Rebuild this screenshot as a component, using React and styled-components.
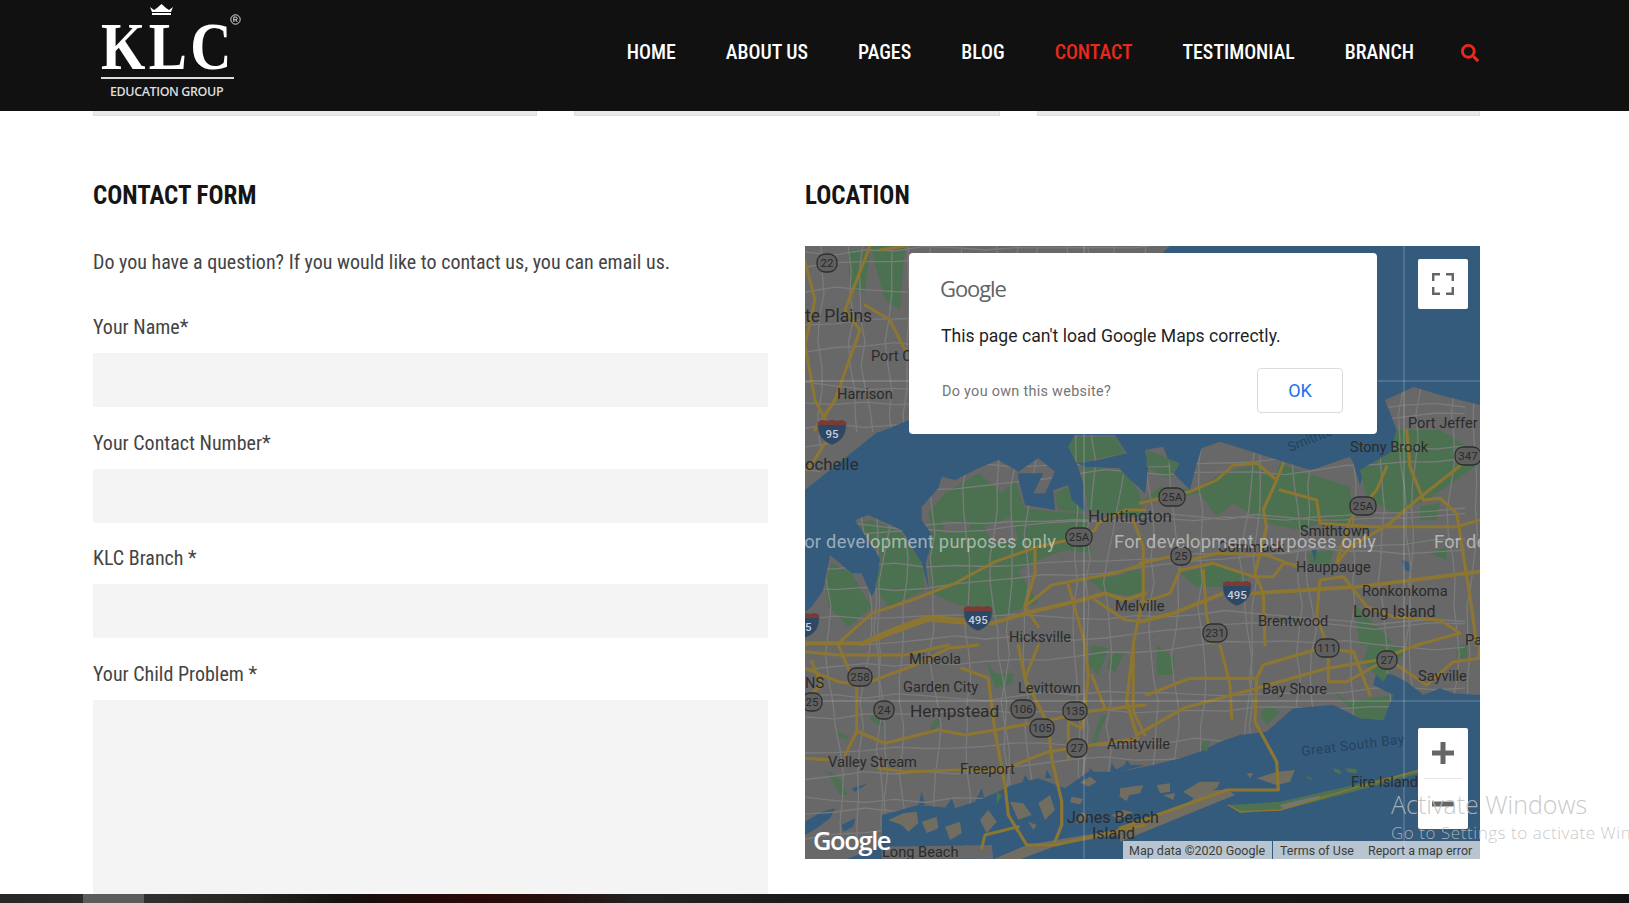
import React from "react";
import styled, { createGlobalStyle } from "styled-components";
import { FaSearch } from "react-icons/fa";

const Global = createGlobalStyle`
  html, body { margin: 0; padding: 0; background: #fff; height: 100%; overflow: hidden; }
  #root { height: 100%; }
  * { box-sizing: border-box; }
`;
const COND = `"Roboto", "Liberation Sans", sans-serif`;

const Page = styled.div`
  position: relative; height: 903px; display: flex; flex-direction: column; overflow: hidden;
  font-family: ${COND}; font-stretch: 75%;
`;
const Header = styled.header`
  flex: none; height: 111px; background: #111; display: flex; align-items: flex-start;
  justify-content: space-between; padding: 0 150px 0 101px;
`;
const Logo = styled.div`position: relative; width: 136px; height: 111px; display: flex; flex-direction: column; color: #fff;`;
const LogoMark = styled.div`
  font-family: "Liberation Serif", serif; font-stretch: normal; font-weight: 700; font-size: 68px; line-height: 46px;
  letter-spacing: 4px; margin-top: 23px; height: 50px; white-space: nowrap; transform: scaleX(.84); transform-origin: left center;
`;
const LogoRule = styled.div`height: 2px; width: 133px; background: #ddd; margin-top: 4px;`;
const LogoSub = styled.div`
  font-family: "Open Sans", sans-serif; font-stretch: normal; font-size: 12.5px; font-weight: 600; letter-spacing: -0.4px;
  color: #ddd; margin: 5px 0 0 9px; white-space: nowrap; line-height: 16px;
`;
const Crown = styled.svg`position: absolute; left: 49px; top: 4px;`;
const Registered = styled.svg`position: absolute; left: 129px; top: 14px;`;
const Nav = styled.nav`display: flex; align-items: center; gap: 50px; height: 105px;`;
const NavLink = styled.a`
  font-size: 19.85px; font-weight: 500; color: ${p => (p.$active ? "#e8291c" : "#fff")}; white-space: nowrap; line-height: 24px;
`;
const SearchBtn = styled.span`display: flex; color: #e8291c; font-size: 18px; margin-left: -3px;`;
const Strip = styled.div`
  flex: none; height: 5px; display: grid; grid-template-columns: 444px 426px 443px; justify-content: space-between; margin: 0 149px 0 93px;
`;
const StripCard = styled.div`background: #e9e9e9; border: 1px solid #dedede; border-top: 0;`;
const Main = styled.main`
  flex: 1; min-height: 0; overflow: hidden; display: grid; grid-template-columns: 675px 675px;
  column-gap: 37px; padding: 65px 0 0 93px;
`;
const Column = styled.section`display: flex; flex-direction: column; min-width: 0;`;
const Heading = styled.h2`
  margin: 0; font-size: 25px; font-weight: 700; line-height: 30px; color: #151515; text-transform: uppercase;
`;
const Intro = styled.p`margin: 36px 0 0; font-size: 20px; line-height: 30px; color: #444;`;
const Field = styled.label`display: block; margin-top: ${p => p.$first ? "37px" : "22.5px"};`;
const FieldLabel = styled.span`display: block; font-size: 20px; line-height: 26px; color: #444; margin-bottom: 13px;`;
const Input = styled.div`height: 54px; background: #f4f4f4;`;
const TextArea = styled.div`height: 240px; background: #f4f4f4;`;
const MapFrame = styled.div`
  position: relative; width: 675px; height: 613px; margin-top: 35px; overflow: hidden; background: #355b7c;
  font-stretch: normal;
`;
const MapArt = styled.svg`display: block;`;
const MapLabel = styled.text`
  font-family: Roboto, sans-serif; font-stretch: normal; font-size: ${p => p.$s || 14}px; fill: ${p => p.$c || "#2b2b2b"};
  font-weight: 400;
`;
const DevText = styled.text`
  font-family: Roboto, sans-serif; font-stretch: normal; font-size: 18.3px; fill: #fff; fill-opacity: .5;
  letter-spacing: .25px;
`;
const ShieldText = styled.text`
  font-family: Roboto, sans-serif; font-stretch: normal; font-size: 11.5px; text-anchor: middle; fill: ${p => p.$c || "#2a2a2a"};
  font-weight: ${p => p.$w || 400};
`;
const Dialog = styled.div`
  position: absolute; left: 104px; top: 7px; width: 468px; height: 181px; background: #fff; border-radius: 4px;
  padding: 21px 34px 0 32px; display: flex; flex-direction: column; font-family: Roboto, sans-serif;
`;
const DialogLogo = styled.div`
  font-family: "Open Sans", sans-serif; font-size: 22px; letter-spacing: -1.1px; color: #5f6368; line-height: 28px; margin-left: -1px;
`;
const DialogMessage = styled.div`font-size: 17.6px; line-height: 24px; color: #1f1f1f; margin-top: 22px;`;
const DialogRow = styled.div`display: flex; justify-content: space-between; align-items: center; margin-top: 20px;`;
const OwnLink = styled.a`font-size: 14.4px; color: #757575; letter-spacing: .3px; margin: 2px 0 0 1px;`;
const OkButton = styled.button`
  width: 86px; height: 45px; background: #fff; border: 1px solid #dadce0; border-radius: 4px; color: #1a73e8;
  font: 400 18px Roboto, sans-serif; flex: none;
`;
const MapControl = styled.div`
  position: absolute; left: 613px; top: ${p => p.$top}px; width: 50px; height: ${p => p.$h}px; background: #fff; border-radius: 2px;
  display: flex; flex-direction: column; align-items: center; justify-content: center;
`;
const ZoomDivider = styled.div`width: 38px; height: 1px; background: #e6e6e6;`;
const ZoomGlyph = styled.svg`display: block; margin: 14px 0;`;
const GoogleMark = styled.div`
  position: absolute; left: 8px; top: 579px; color: #fff; font-family: "Open Sans", sans-serif; font-weight: 600;
  font-size: 25.5px; line-height: 30px; letter-spacing: -1.4px;
`;
const Attribution = styled.div`
  position: absolute; right: 0; bottom: 0; left: 318px; height: 18px; background: rgba(214,221,227,.82);
  display: flex; align-items: center; font-family: Roboto, sans-serif; font-size: 12.5px; color: #3c3c3c; padding-left: 6px; white-space: nowrap;
`;
const AttributionItem = styled.span`
  width: ${p => p.$w}px; height: 100%; line-height: 19px; flex: none;
  ${p => p.$rule ? "border-right: 1px solid #355b7c;" : ""}
  ${p => p.$pad ? `padding-left: ${p.$pad}px;` : ""}
`;
const Footer = styled.footer`
  position: absolute; left: 0; right: 0; bottom: 0; height: 9px;
  background: linear-gradient(90deg, #262626 0, #2f2f2f 160px, #2a2622 240px, #141210 340px, #1a0c0c 370px, #2a0808 480px, #261010 560px, #222 640px, #1b1b1b 800px, #141414 1629px);
`;
const FooterThumb = styled.div`position: absolute; left: 83px; top: 0; width: 61px; height: 9px; background: #5c5c5c;`;
const Watermark = styled.div`
  position: absolute; left: 1391px; top: 787px; pointer-events: none; font-family: "Open Sans", sans-serif; font-stretch: normal;
  color: rgba(190,190,190,.85); font-weight: 300; white-space: nowrap;
`;
const WatermarkTitle = styled.div`font-size: 25px; line-height: 34px;`;
const WatermarkSub = styled.div`font-size: 17px; letter-spacing: .55px; line-height: 22px; margin-top: 1px;`;

/* ---- map drawing ---- */
const P = (ox, oy, s) => s.trim().split(/\s+/).map(q => { const [x, y] = q.split(",").map(Number); return `${(ox + x / 3).toFixed(1)},${(oy + y / 3).toFixed(1)}`; }).join(" ");
const Z7 = s => P(805, 430, s), Z8 = s => P(1140, 430, s), Z9 = s => P(805, 645, s), Z10 = s => P(1120, 645, s);
const F = s => P(0, 0, s.trim().split(/\s+/).map(q => { const [x, y] = q.split(",").map(Number); return `${x * 3},${y * 3}`; }).join(" "));

const LAND = [
  F("805,246 1170,246 1160,255 909,262 909,420 880,432"), Z7("105,5 65,50 40,55 45,130 0,170"),
  F("805,492 805,246"),
].join(" ");
const ISLAND = [
  F("805,612"),
  Z7("20,530 55,480 75,375 140,430 170,430 200,500 215,470 225,385 150,270 190,255 290,300 350,400 372,480 362,400 385,320 350,270 350,230 400,175 410,140 450,150 520,115 580,90 640,125 700,85 750,125 720,190 685,190 715,130 640,130 640,170 600,180 570,140 640,145 660,225 750,240 745,180 790,165 800,210 840,245 835,160 815,100 790,50 810,15 930,15 965,70 880,90 815,100 840,110 945,115 950,130 1000,170 1020,190"),
  Z8("25,110 15,60 70,50 100,130 150,180 170,100 185,55 240,35 350,70 430,95 510,120 530,115 630,80 640,100 660,165 675,110 750,70 770,0"),
  F("1385,400 1414,387 1440,395 1480,405 1480,682"),
  Z10("1080,150 1000,145 960,130 910,150 860,110 820,90 770,80 760,120 820,150 790,225 720,220 640,180 520,190 440,260 360,270 300,290 240,320 180,340 100,360 0,380"),
  Z9("1020,360 960,360 920,380 850,380 780,430 700,400 620,420 580,440 510,470 450,490 340,480 230,510 230,600 120,645 0,645"),
].join(" ");
const INLETS = [
  Z9("0,530 50,500 90,490 75,520 35,550 0,570"), Z9("110,540 150,520 145,545 115,560"), Z9("510,470 530,430 540,470"), Z9("650,420 660,390 680,420"),
  Z9("720,400 725,375 740,400"), Z9("850,385 855,370 870,385"), Z9("915,380 920,355 935,375"), Z9("960,360 965,345 980,365"),
  Z9("420,490 440,460 450,490"), Z9("340,480 350,440 360,480"), Z9("140,430 190,415 150,440"),
  Z8("785,390 805,395 815,425 795,420"), Z8("515,360 530,360 525,395"),
];

const GREENS = [
  Z7("380,310 370,250 420,190 520,130 570,170 590,190 630,150 660,235 750,245 840,250 860,370 780,360 700,390 640,420 700,520 580,560 450,520 380,490 370,400"),
  Z7("160,280 200,270 290,310 350,400 360,480 250,530 210,470 230,380"),
  Z7("80,400 140,430 180,500 200,530 130,590 70,530 60,460"),
  Z7("790,50 810,20 930,20 960,70 880,85 815,100"), Z7("750,190 790,170 800,210 840,245 760,240"),
  Z7("830,110 950,120 1000,180 1020,260 880,250 850,240"), Z7("840,440 930,440 1020,410 1020,500 900,490"),
  Z8("0,220 60,170 170,180 240,130 350,105 400,150 420,100 500,130 630,170 640,290 540,280 480,300 380,280 280,220 230,260 180,190"),
  Z8("660,120 750,70 770,0 900,0 1000,60 1020,100 860,210 760,250 680,200"),
  Z8("640,520 760,640 660,645"), Z8("120,430 240,400 330,440 250,470 170,470"), Z8("500,370 580,360 570,400 510,400"),
  Z8("840,230 900,220 890,270 840,270"), Z8("870,370 920,350 920,390"), Z8("20,60 120,100 90,150 20,110"),
  Z8("290,540 330,530 320,620 290,620"), Z8("430,220 480,210 460,260"),
  Z9("860,0 910,10 880,90 850,60"), Z9("920,20 960,20 930,80 905,70"), Z9("570,85 625,85 620,115 570,130 545,50"),
  Z9("395,220 410,225 385,260 375,250"), Z9("200,210 240,235 230,245 195,225"), Z9("100,260 130,275 125,285 95,270"),
  Z9("905,210 870,300 860,290 890,210"), Z9("65,375 100,395 130,450 105,450"), Z9("575,440 590,450 575,480"),
  Z10("110,0 165,40 160,90 110,90"), Z10("640,140 690,170 820,150 790,225 720,220"), Z10("745,0 880,0 820,60 790,110 730,50"),
  Z10("1010,0 1040,0 1040,40 1010,40"), Z10("250,290 270,290 260,320 240,310"), Z10("440,180 480,200 440,240 420,210"),
  F("805,300 835,320 820,360 805,370"), F("848,250 870,250 865,292 850,290"), F("825,368 850,372 825,420 815,430"),
  F("870,246 905,246 900,310 885,300"), F("805,420 818,440 805,452"),
];
const URBAN = [
  Z7("410,270 500,280 490,300 420,310"), Z7("540,290 620,260 640,330 560,340"), Z7("805,510 870,520 860,640 750,640"),
  Z7("0,640 805,620 1020,600 1020,645"), Z8("650,470 800,440 1020,400 1020,500 880,500 780,480"), Z8("0,640 180,550 340,490 640,470 640,645"),
  Z8("0,360 100,330 200,340 130,420 0,430"), Z8("300,300 460,300 440,390 320,400"),
  F("805,300 860,300 905,380 880,430 830,470 805,490"), F("820,262 860,300 830,300"),
];
const MARSH = [
  Z9("250,525 295,505 335,500 340,535 310,560 290,540"), Z9("420,545 465,530 470,565 435,585"), Z9("525,525 550,495 575,530 545,565"),
  Z9("615,470 655,475 680,510 640,525"), Z9("700,475 735,450 750,495 720,525"), Z9("800,455 835,462 825,478 795,472"),
  Z9("825,412 855,395 875,410 850,425"), Z9("940,452 975,443 965,468"), Z9("920,510 955,495 985,502 940,525"),
  Z9("670,530 695,540 685,555"), Z9("830,502 855,512 838,527 812,536"), Z9("350,530 395,515 400,550 365,565"),
  Z10("0,430 70,420 60,445 0,455"), Z10("110,420 150,415 150,440 120,445"), Z10("190,440 240,410 300,410 290,430 220,460"),
  Z10("410,400 470,380 525,375 510,410 470,420"), Z10("380,385 400,385 390,400"), Z10("130,450 165,445 160,465"),
  Z10("250,435 320,435 290,460 210,470"),
];
const BARRIERS = [
  Z9("230,605 560,600 565,640 230,645"),
  Z9("665,600 1020,540 1020,555 760,600 640,645 560,645"),
  Z10("0,545 320,432 345,450 0,590"),
];
const FIRE = [Z10("325,480 370,478 480,470 660,430 900,375 900,385 700,440 500,492 360,505")];
const FIRE_GRAY = [Z10("480,480 540,465 600,452 600,462 490,492")];
const ISLETS = [Z10("640,370 660,375 665,388 645,382"), Z10("675,370 710,372 710,385 685,382"), Z10("555,390 580,402 570,405")];

const ROADS = [
  [Z7("100,640 200,550 320,510 450,460 570,395 700,350 790,330 870,300 880,280 960,240 1020,240"), 3],
  [Z8("0,220 60,205 150,185 230,150 280,105 350,100 410,150 430,100"), 3],
  [Z7("0,640 170,640 260,600 370,560 480,570 560,580 700,540 830,510 900,490 960,510 1020,490"), 4],
  [Z7("170,645 260,610 370,570 480,580"), 3],
  [Z7("660,530 690,430 690,360"), 3.2], [Z7("660,530 700,590"), 2.8], [Z7("790,465 840,640"), 3],
  [Z7("660,530 740,465 930,430 1020,400"), 3], [Z7("870,510 960,570 1020,575"), 3], [Z7("985,270 1015,350 1015,500 985,640"), 3],
  [Z8("0,575 100,550 250,490 340,490 660,470 1020,425"), 3.8], [Z8("410,150 370,240 380,290 345,430 370,490 375,645"), 3.2],
  [Z8("420,180 530,210 540,280 700,290 950,290 1020,270"), 3], [Z8("590,400 630,350 700,310 750,280 830,210 970,100 1020,60"), 3.2],
  [Z8("740,110 710,180 630,270 590,395"), 3], [Z8("800,0 810,110 850,210 900,205 950,250 990,500 1010,645"), 3.2],
  [Z8("0,400 90,380 150,390 230,370 380,375 470,410"), 3], [Z8("120,420 90,490 0,520"), 3],
  [Z8("120,420 220,400 340,440 400,440 430,400 470,405"), 3], [Z8("190,420 200,560 220,640"), 3],
  [Z8("530,560 540,450 610,440 680,530 760,560 900,570 960,610 830,645"), 3], [Z8("530,560 560,640"), 3],
  [Z9("0,70 100,110 170,120 250,90 330,60 430,10 520,0"), 3], [Z9("0,20 100,30 300,30 430,0"), 3], [Z9("20,50 50,120 0,160"), 3],
  [Z9("100,0 130,70 155,130 155,260 120,330"), 3], [Z9("160,260 240,295 400,255 480,270 570,255 760,220 840,200 1020,180"), 3.2],
  [Z9("470,70 550,100 570,260 600,420 610,510 665,600 750,600 1020,540"), 3.2], [Z9("640,0 660,100 730,240 740,340 770,470 770,540 750,590"), 3.2],
  [Z9("700,0 660,100"), 3], [Z9("0,340 70,345"), 3], [Z9("220,370 300,380 460,375 590,375 730,320 860,300 1000,280"), 3],
  [Z9("840,0 850,90 840,200 830,250 790,230 790,340"), 3], [Z9("985,0 985,200 1020,270"), 3], [Z9("860,90 900,190"), 3], [Z9("530,610 540,570 640,545"), 3],
  [Z10("40,0 20,170 50,270 190,190 410,130 620,70 775,45 890,0"), 3.2], [Z10("80,150 210,100 410,100 430,60 600,10 700,20 750,150"), 3.2],
  [Z10("300,0 330,120 335,220"), 3], [Z10("410,100 405,230 470,350 475,435 320,435 0,550"), 3.2], [Z10("625,20 625,110 680,110 770,60"), 3],
  [Z10("830,60 920,120 1000,50 1080,40"), 3], [Z10("1080,0 1075,40"), 3], [Z10("325,480 360,500 480,495 700,430 900,375"), 1.4],
  [F("870,246 845,310 860,330 835,400 815,430"), 3.2], [F("805,262 815,300 805,345 815,400 832,432"), 3], [F("832,432 808,470"), 3.2],
  [F("865,305 890,320 905,350"), 3], [F("880,250 905,246"), 3.2],
];

let seed = 11;
const rnd = () => { seed = (seed * 16807) % 2147483647; return seed / 2147483647; };
const MINOR = [];
for (let x = 805; x < 1480; x += 19 + rnd() * 14) {
  let pts = [], cx = x;
  for (let y = 246; y < 860; y += 24) { cx += (rnd() - 0.5) * 10; pts.push(`${cx.toFixed(1)},${y}`); }
  MINOR.push(pts.join(" "));
}
for (let y = 250; y < 860; y += 18 + rnd() * 14) {
  let pts = [], cy = y;
  for (let x = 805; x < 1490; x += 30) { cy += (rnd() - 0.5) * 9 - 0.7; pts.push(`${x},${cy.toFixed(1)}`); }
  MINOR.push(pts.join(" "));
}

const LABELS = [
  ["te Plains", 805, 322, 17.5], ["Port C", 871, 361, 14.6], ["Harrison", 837, 399, 14.6], ["ochelle", 805, 470, 16.8],
  ["Huntington", 1088, 522, 17], ["Commack", 1218, 552, 14.6], ["Smithtown", 1300, 536, 14.6], ["Hauppauge", 1296, 572, 14.6],
  ["Ronkonkoma", 1362, 596, 14.6], ["Long Island", 1353, 617, 16], ["Brentwood", 1258, 626, 14.6], ["Stony Brook", 1350, 452, 14.6],
  ["Port Jeffer", 1408, 428, 14.6], ["Hicksville", 1009, 642, 14.6], ["Melville", 1115, 611, 14.6], ["Mineola", 909, 664, 14.6],
  ["Garden City", 903, 692, 14.6], ["Hempstead", 910, 717, 17.3], ["Levittown", 1018, 693, 14.6], ["Valley Stream", 828, 767, 14.6],
  ["Freeport", 960, 774, 14.6], ["Amityville", 1107, 749, 14.6], ["Jones Beach", 1067, 823, 16], ["Island", 1092, 839, 16],
  ["Long Beach", 882, 857, 14.6], ["Bay Shore", 1262, 694, 14.6], ["Sayville", 1418, 681, 14.6], ["Fire Island", 1351, 787, 14.6],
  ["NS", 805, 688, 14.6], ["Pa", 1465, 645, 14.6],
];
const COUNTY = [
  ["25A", 1079, 537, 26], ["25A", 1172, 497, 26], ["25A", 1363, 506, 26], ["25", 1181, 556, 20], ["22", 827, 263, 20], ["347", 1468, 456, 26],
  ["231", 1215, 633, 24], ["111", 1327, 648, 24], ["27", 1387, 660, 20], ["258", 860, 677, 24], ["25", 812, 702, 20], ["24", 884, 710, 20],
  ["106", 1023, 709, 24], ["135", 1075, 711, 24], ["105", 1042, 728, 24], ["27", 1077, 748, 20],
];
const INTER = [["495", 978, 618], ["495", 1237, 593], ["95", 832, 432], ["95", 805, 625]];

const MapDrawing = () => (
  <MapArt width="675" height="613" viewBox="805 246 675 613">
    <defs>
      <clipPath id="landClip"><polygon points={ISLAND} /><polygon points={LAND} /><polygon points={BARRIERS[0]} /></clipPath>
    </defs>
    <rect x="805" y="246" width="675" height="613" fill="#355b7c" />
    <polygon points={LAND} fill="#686868" />
    <polygon points={ISLAND} fill="#686868" />
    {BARRIERS.map((p, i) => <polygon key={i} points={p} fill={i === 0 ? "#686868" : "#716d60"} />)}
    {MARSH.map((p, i) => <polygon key={i} points={p} fill="#716d60" />)}
    {ISLETS.map((p, i) => <polygon key={i} points={p} fill="#4f7252" />)}
    {GREENS.map((p, i) => <polygon key={i} points={p} fill="#4b7150" />)}
    {FIRE.map((p, i) => <polygon key={i} points={p} fill="#4f7252" />)}
    {FIRE_GRAY.map((p, i) => <polygon key={i} points={p} fill="#757575" />)}
    {URBAN.map((p, i) => <polygon key={i} points={p} fill="#686868" />)}
    {INLETS.map((p, i) => <polygon key={i} points={p} fill="#355b7c" />)}
    <g clipPath="url(#landClip)" fill="none" stroke="#7b7b7b" strokeWidth="1.3">
      {MINOR.map((p, i) => <polyline key={i} points={p} />)}
    </g>
    <g fill="none" stroke="#8c7632" strokeLinejoin="round" strokeLinecap="round">
      {ROADS.map(([p, w], i) => <polyline key={i} points={p} strokeWidth={w} />)}
    </g>
    <path d="M1084 246V859M1404 246V859M805 701H1480M805 381H1480" stroke="#fff" strokeOpacity=".28" strokeWidth="1" fill="none" />
    {LABELS.map(([t, x, y, s]) => <MapLabel key={t + x} x={x} y={y} $s={s}>{t}</MapLabel>)}
    <MapLabel x="1302" y="756" $s={13.5} $c="#24425d" transform="rotate(-7 1302 756)" letterSpacing=".5">Great South Bay</MapLabel>
    <MapLabel x="1290" y="452" $s={13.5} $c="#24425d" transform="rotate(-22 1290 452)">Smithtown Bay</MapLabel>
    {COUNTY.map(([t, x, y, w]) => (
      <g key={t + x}>
        <rect x={x - w / 2} y={y - 9} width={w} height="18" rx="8" fill="#5f5f5f" stroke="#2e2e2e" strokeWidth="1.3" />
        <ShieldText x={x} y={y + 4}>{t}</ShieldText>
      </g>
    ))}
    {INTER.map(([t, x, y]) => (
      <g key={t + x}>
        <path d={`M${x - 14} ${y - 10}l4 -2 5 1 5 -1 5 1 5 -1 4 2c1 9 -1 18 -14 23c-13 -5 -15 -14 -14 -23z`} fill="#2d4766" stroke="#666" strokeWidth=".8" />
        <path d={`M${x - 14} ${y - 10}l4 -2 5 1 5 -1 5 1 5 -1 4 2v3h-28z`} fill="#7c3a34" />
        <ShieldText x={x} y={y + 6} $c="#c9ced6" $w={500}>{t}</ShieldText>
      </g>
    ))}
    {[794, 1114, 1434].map(x => <DevText key={x} x={x} y="548">For development purposes only</DevText>)}
    {[794, 1114, 1434].map(x => <DevText key={x} x={x} y="873">For development purposes only</DevText>)}
  </MapArt>
);

export default function App() {
  return (
    <Page>
      <Global />
      <Header>
        <Logo>
          <Crown width="23" height="11" viewBox="0 0 23 11">
            <path d="M0 3l4 3 3-2 4.500-4 4.500 4 3 2 4-3-2 5H2zM2 9h19v2H2z" fill="#fff" />
          </Crown>
          <Registered width="11" height="11" viewBox="0 0 11 11">
            <circle cx="5.500" cy="5.500" r="4.700" fill="none" stroke="#ddd" />
            <path d="M3.800 8V3h2a1.300 1.300 0 0 1 0 2.800h-2M5.800 5.800L7.300 8" fill="none" stroke="#ddd" />
          </Registered>
          <LogoMark>KLC</LogoMark>
          <LogoRule />
          <LogoSub>EDUCATION GROUP</LogoSub>
        </Logo>
        <Nav>
          <NavLink>HOME</NavLink>
          <NavLink>ABOUT US</NavLink>
          <NavLink>PAGES</NavLink>
          <NavLink>BLOG</NavLink>
          <NavLink $active>CONTACT</NavLink>
          <NavLink>TESTIMONIAL</NavLink>
          <NavLink>BRANCH</NavLink>
          <SearchBtn><FaSearch /></SearchBtn>
        </Nav>
      </Header>
      <Strip><StripCard /><StripCard /><StripCard /></Strip>
      <Main>
        <Column>
          <Heading>Contact Form</Heading>
          <Intro>Do you have a question? If you would like to contact us, you can email us.</Intro>
          <Field $first><FieldLabel>Your Name*</FieldLabel><Input /></Field>
          <Field><FieldLabel>Your Contact Number*</FieldLabel><Input /></Field>
          <Field><FieldLabel>KLC Branch *</FieldLabel><Input /></Field>
          <Field><FieldLabel>Your Child Problem *</FieldLabel><TextArea /></Field>
        </Column>
        <Column>
          <Heading>Location</Heading>
          <MapFrame>
            <MapDrawing />
            <Dialog>
              <DialogLogo>Google</DialogLogo>
              <DialogMessage>This page can't load Google Maps correctly.</DialogMessage>
              <DialogRow>
                <OwnLink>Do you own this website?</OwnLink>
                <OkButton>OK</OkButton>
              </DialogRow>
            </Dialog>
            <MapControl $top={13} $h={50}>
              <svg width="22" height="22" viewBox="0 0 22 22" fill="none" stroke="#666" strokeWidth="2.500">
                <path d="M1.200 8V1.200H8M14 1.200h6.800V8M20.800 14v6.800H14M8 20.800H1.200V14" />
              </svg>
            </MapControl>
            <MapControl $top={482} $h={101}>
              <ZoomGlyph width="22" height="22" viewBox="0 0 22 22"><path d="M11 0v22M0 11h22" stroke="#666" strokeWidth="5" /></ZoomGlyph>
              <ZoomDivider />
              <ZoomGlyph width="22" height="22" viewBox="0 0 22 22"><path d="M0 11h22" stroke="#666" strokeWidth="5" /></ZoomGlyph>
            </MapControl>
            <GoogleMark>Google</GoogleMark>
            <Attribution>
              <AttributionItem $w={144} $rule>Map data ©2020 Google</AttributionItem>
              <AttributionItem $w={95} $pad={7}>Terms of Use</AttributionItem>
              <AttributionItem $w={118}>Report a map error</AttributionItem>
            </Attribution>
          </MapFrame>
        </Column>
      </Main>
      <Footer><FooterThumb /></Footer>
      <Watermark>
        <WatermarkTitle>Activate Windows</WatermarkTitle>
        <WatermarkSub>Go to Settings to activate Windows.</WatermarkSub>
      </Watermark>
    </Page>
  );
}
